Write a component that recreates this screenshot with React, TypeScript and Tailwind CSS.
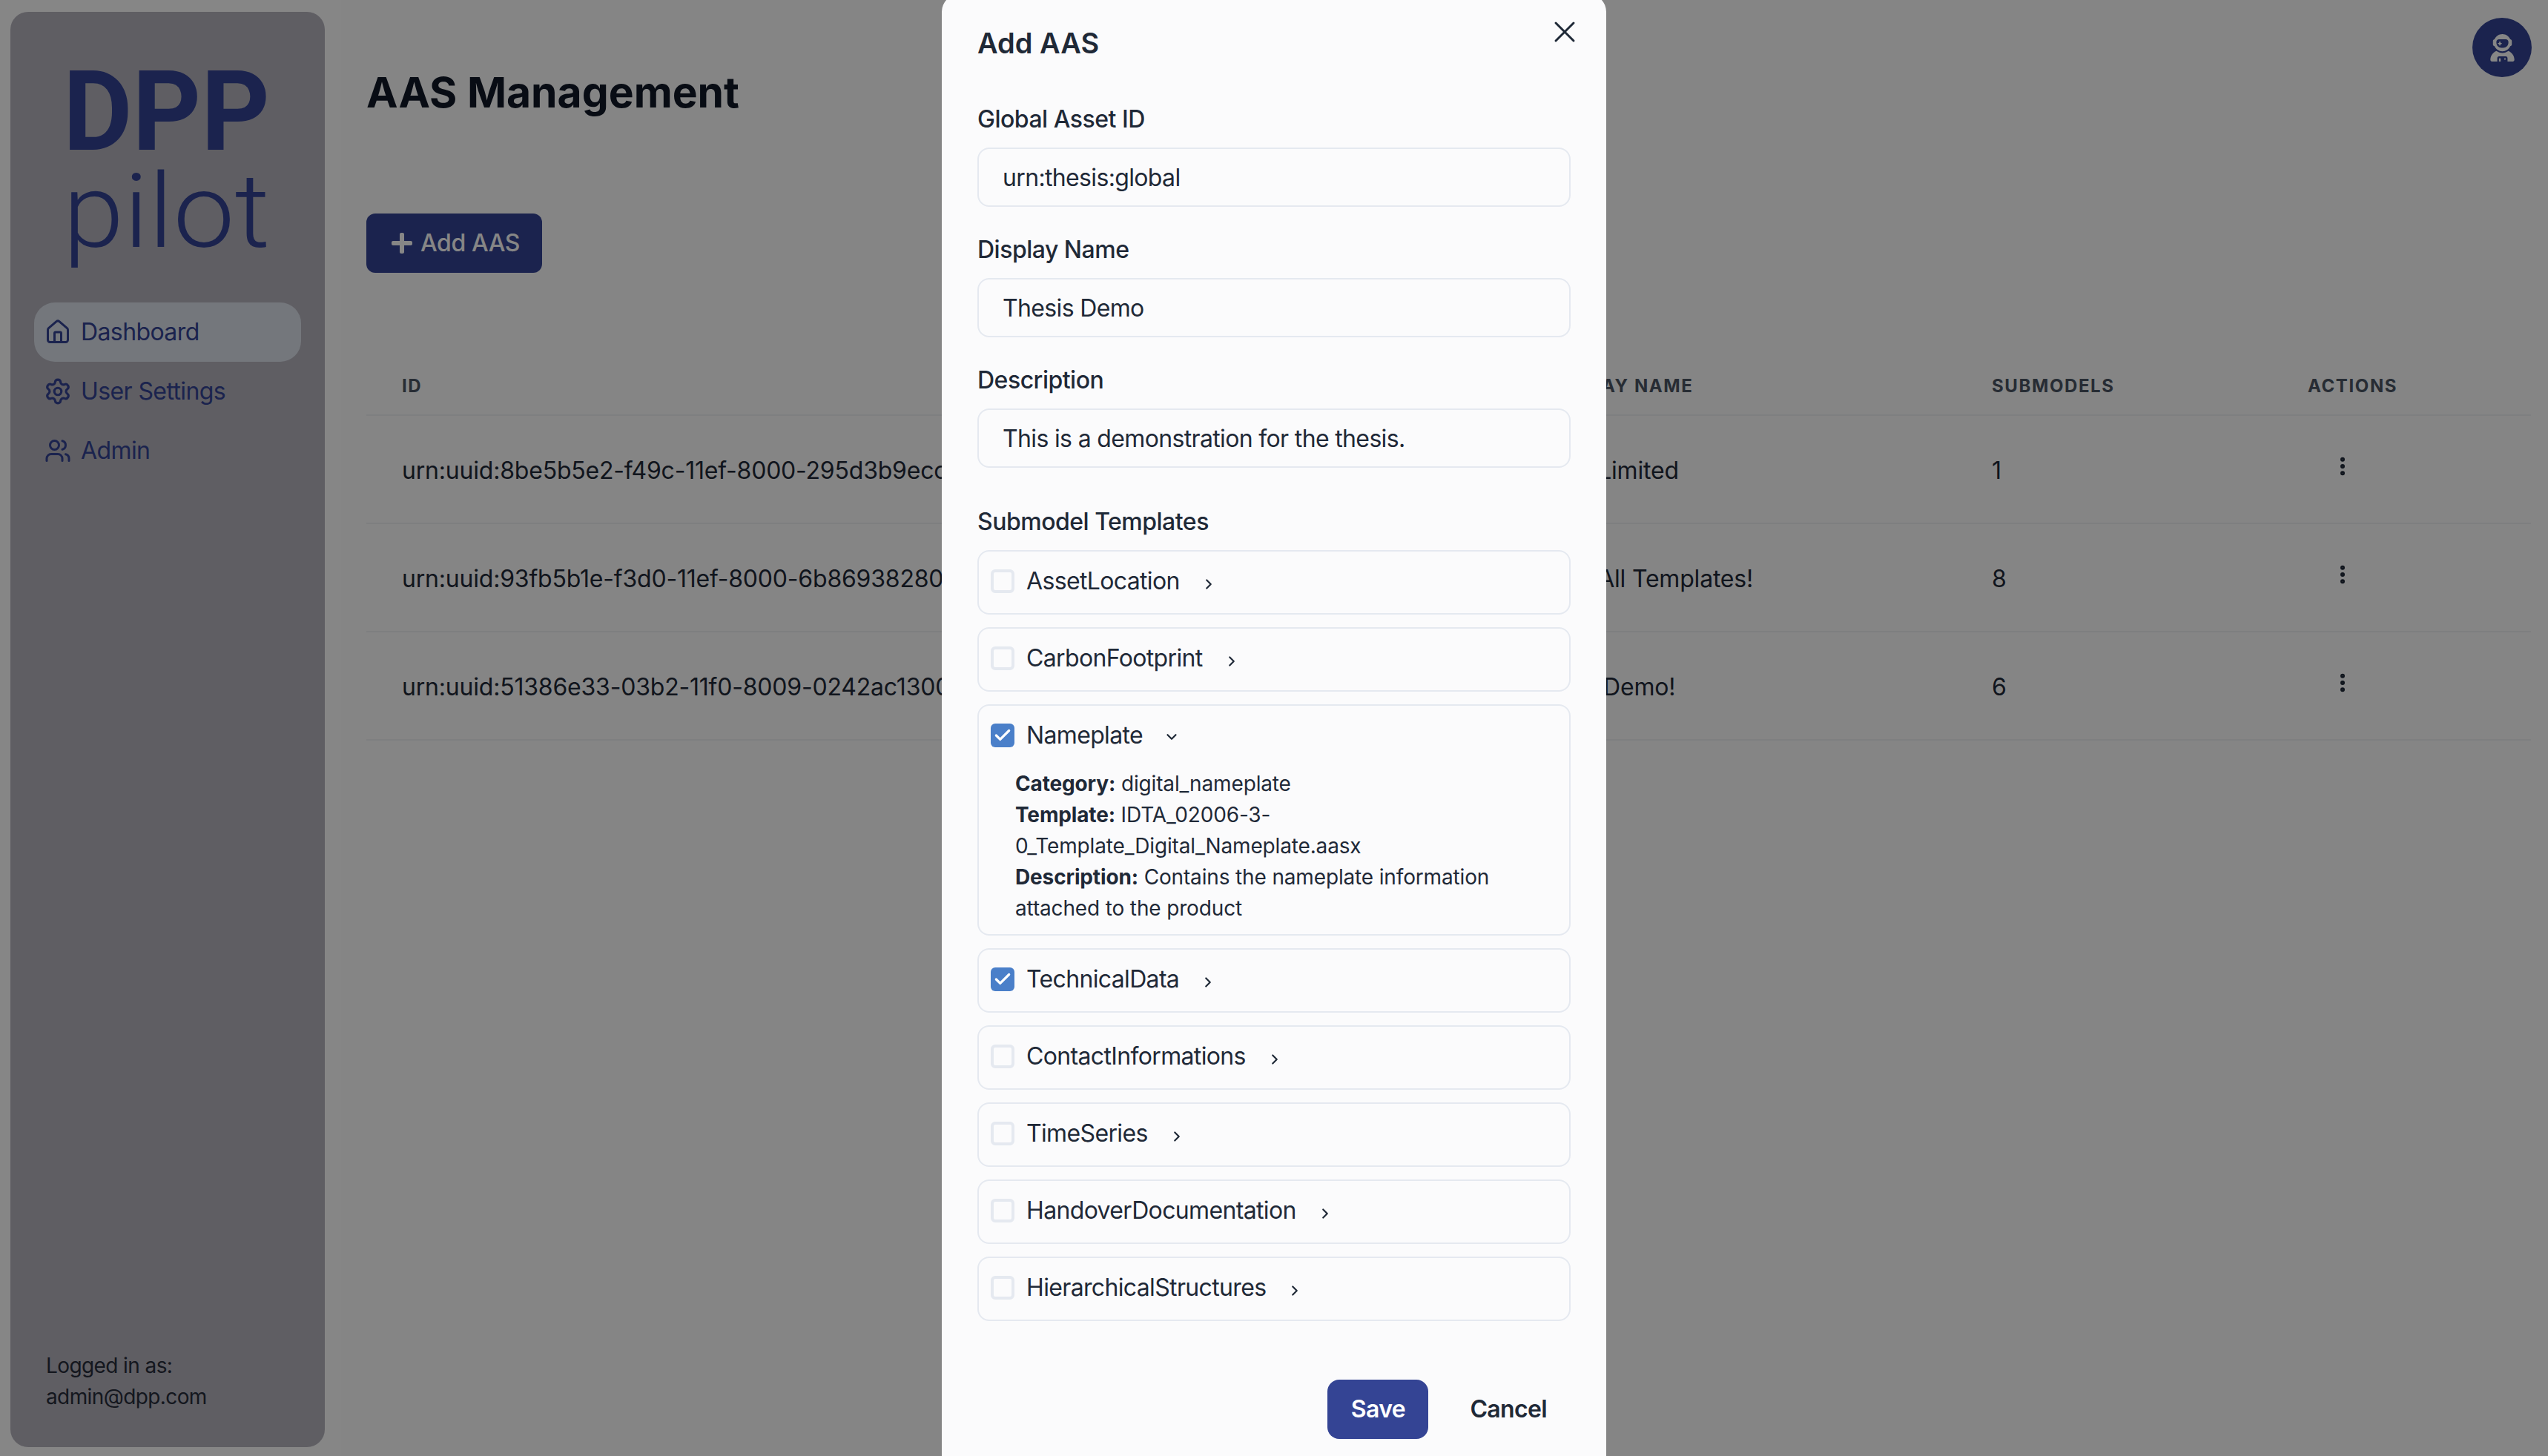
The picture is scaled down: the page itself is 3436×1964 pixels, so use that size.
import { Check, ChevronDown, ChevronRight, EllipsisVertical, House, Settings, Users, X } from "lucide-react"
import { FaPlus } from "react-icons/fa"
import { FaUserAstronaut } from "react-icons/fa6"

const navItems = [
  { label: "Dashboard", icon: House, size: 36, active: true },
  { label: "User Settings", icon: Settings, size: 38, active: false },
  { label: "Admin", icon: Users, size: 36, active: false },
]

const rows = [
  { id: "urn:uuid:8be5b5e2-f49c-11ef-8000-295d3b9ecc01", name: "Test Limited", submodels: 1 },
  { id: "urn:uuid:93fb5b1e-f3d0-11ef-8000-6b8693828012", name: "Test All Templates!", submodels: 8 },
  { id: "urn:uuid:51386e33-03b2-11f0-8009-0242ac130003", name: "Final Demo!", submodels: 6 },
]

const fields = [
  { label: "Global Asset ID", value: "urn:thesis:global" },
  { label: "Display Name", value: "Thesis Demo" },
  { label: "Description", value: "This is a demonstration for the thesis." },
]

const templates = [
  { name: "AssetLocation", checked: false, open: false },
  { name: "CarbonFootprint", checked: false, open: false },
  { name: "Nameplate", checked: true, open: true },
  { name: "TechnicalData", checked: true, open: false },
  { name: "ContactInformations", checked: false, open: false },
  { name: "TimeSeries", checked: false, open: false },
  { name: "HandoverDocumentation", checked: false, open: false },
  { name: "HierarchicalStructures", checked: false, open: false },
]

function Sidebar() {
  return (
    <aside className="w-[460px] shrink-0 pl-[14px] pt-4 pb-3">
      <div className="flex h-full w-[424px] flex-col rounded-3xl bg-[#b5b3bd]">
        {/* Logo */}
        <svg className="mt-[39px] ml-[60px] block" width="304" height="322" viewBox="0 0 304 322">
          <text x="11" y="147" fontFamily="Roboto" fontWeight="700" fontSize="150" textLength="279" lengthAdjust="spacingAndGlyphs" fill="#344494">
            DPP
          </text>
          <text x="11" y="278" fontFamily="Roboto" fontWeight="300" fontSize="140" textLength="279" lengthAdjust="spacingAndGlyphs" fill="#344494">
            pilot
          </text>
        </svg>

        <nav className="mt-[31px] flex flex-col px-8">
          {navItems.map((item) => (
            <div
              key={item.label}
              className={`flex h-20 items-center gap-[13px] rounded-[28px] px-[14px] text-[32px] tracking-[-0.6px] text-[#344494] ${
                item.active ? "bg-[#dde3ec]" : ""
              }`}
            >
              <span className="flex w-9 justify-center">
                <item.icon size={item.size} strokeWidth={2} className="shrink-0" />
              </span>
              <span>{item.label}</span>
            </div>
          ))}
        </nav>

        <div className="mt-auto pb-[47px] pl-12 text-[28px] leading-[42px] tracking-[-0.6px] text-[#272c3a]">
          <p>Logged in as:</p>
          <p>admin@dpp.com</p>
        </div>
      </div>
    </aside>
  )
}

function AasTable() {
  return (
    <table className="mt-[114px] w-[2919px] table-fixed border-collapse text-left">
      <colgroup>
        <col className="w-[1541px]" />
        <col className="w-[603px]" />
        <col className="w-[426px]" />
        <col className="w-[349px]" />
      </colgroup>
      <thead>
        <tr className="h-[78px] border-b-2 border-[#f0f2f4] text-[24px] tracking-[1.6px] text-[#4b5563] uppercase">
          <th className="pl-12 font-bold">ID</th>
          <th className="pl-12 font-bold">Display Name</th>
          <th className="pl-12 font-bold">Submodels</th>
          <th className="pl-12 font-bold">Actions</th>
        </tr>
      </thead>
      <tbody>
        {rows.map((row) => (
          <tr key={row.id} className="h-[146px] border-b-2 border-[#f0f2f4] text-[32px] tracking-[-0.2px] text-[#1f2937]">
            <td className="pt-1 pl-12">{row.id}</td>
            <td className="pt-1 pl-12">{row.name}</td>
            <td className="pt-1 pl-12">{row.submodels}</td>
            <td className="pl-[79px]">
              <EllipsisVertical size={32} strokeWidth={2.5} className="-mt-2" />
            </td>
          </tr>
        ))}
      </tbody>
    </table>
  )
}

function TemplateCard({ name, checked, open }: { name: string; checked: boolean; open: boolean }) {
  return (
    <div className={`rounded-2xl border-2 border-[#e5e9f0] px-4 ${open ? "h-[312px]" : "h-[87px]"}`}>
      <div className="mt-6 flex h-8 items-center">
        {checked ? (
          <span className="flex size-8 items-center justify-center rounded-md bg-[#4a7fc9] text-white">
            <Check size={26} strokeWidth={3} />
          </span>
        ) : (
          <span className="size-8 rounded-md border-4 border-[#e5e9f0]" />
        )}
        <span className="ml-4 text-[32px] leading-8 tracking-[-0.65px] text-[#1f2937]">{name}</span>
        {open ? (
          <ChevronDown size={22} strokeWidth={2.4} className="mt-1 ml-[28px] text-[#1f2937]" />
        ) : (
          <ChevronRight size={22} strokeWidth={2.4} className="mt-2 ml-[28px] text-[#1f2937]" />
        )}
      </div>
      {open && (
        <div className="mt-7 ml-[33px] text-[28px] leading-[42px] tracking-[-0.15px] text-[#1f2937]">
          <p>
            <strong className="font-bold">Category:</strong> digital_nameplate
          </p>
          <p>
            <strong className="font-bold">Template:</strong> IDTA_02006-3-0_Template_Digital_Nameplate.aasx
          </p>
          <p>
            <strong className="font-bold">Description:</strong> Contains the nameplate information attached to the product
          </p>
        </div>
      )}
    </div>
  )
}

function AddAasModal() {
  return (
    <div className="absolute inset-0 flex items-start justify-center bg-black/[0.475]">
      <div className="relative -mt-2 w-[896px] shrink-0 rounded-3xl bg-[#fbfbfc] px-12 pt-[46px] pb-12 text-[#1f2937]">
        <button className="absolute top-[27px] right-8 text-[#1f2937]">
          <X size={48} strokeWidth={1.5} />
        </button>
        <h2 className="h-[40px] text-[38px] leading-[40px] font-semibold">Add AAS</h2>

        <div className="mt-[59px] flex flex-col gap-[34px]">
          {fields.map((field) => (
            <label key={field.label} className="block">
              <span className="block text-[32px] leading-12 font-medium tracking-[-0.5px]">{field.label}</span>
              <input
                readOnly
                defaultValue={field.value}
                className="mt-[14px] h-20 w-full rounded-2xl border-2 border-[#e5e9f0] bg-transparent px-8 text-[32px] tracking-[-0.65px] text-[#1f2937] outline-none"
              />
            </label>
          ))}
        </div>

        <h3 className="mt-[49px] text-[32px] leading-12 font-medium tracking-[-0.5px]">Submodel Templates</h3>
        <div className="mt-[14px] flex flex-col gap-[17px]">
          {templates.map((template) => (
            <TemplateCard key={template.name} {...template} />
          ))}
        </div>

        <div className="mt-[79px] flex items-center justify-end">
          <button className="h-20 w-[136px] rounded-2xl bg-[#344494] text-[32px] font-semibold tracking-[-0.65px] text-white">Save</button>
          <button className="ml-6 h-20 px-8 text-[32px] font-semibold tracking-[-0.65px] text-[#1f2937]">Cancel</button>
        </div>
      </div>
    </div>
  )
}

export default function App() {
  return (
    <div className="relative flex h-[1964px] w-[3436px] overflow-hidden bg-white font-[Inter,sans-serif]">
      <Sidebar />

      <main className="flex-1 bg-[#fdfdfd] pt-6 pr-[22px] pl-[34px]">
        <div className="flex items-start justify-between">
          <h1 className="mt-[69px] text-[57px] leading-16 font-bold text-[#111827]">AAS Management</h1>
          <div className="flex size-20 items-center justify-center rounded-full bg-[#344494] text-white">
            <FaUserAstronaut size={37} />
          </div>
        </div>

        <button className="mt-[131px] flex h-20 w-[237px] items-center gap-[9px] rounded-xl bg-[#344494] pl-8 text-[32px] font-medium tracking-[-0.4px] text-white">
          <FaPlus size={32} />
          <span>Add AAS</span>
        </button>

        <AasTable />
      </main>

      <AddAasModal />
    </div>
  )
}
